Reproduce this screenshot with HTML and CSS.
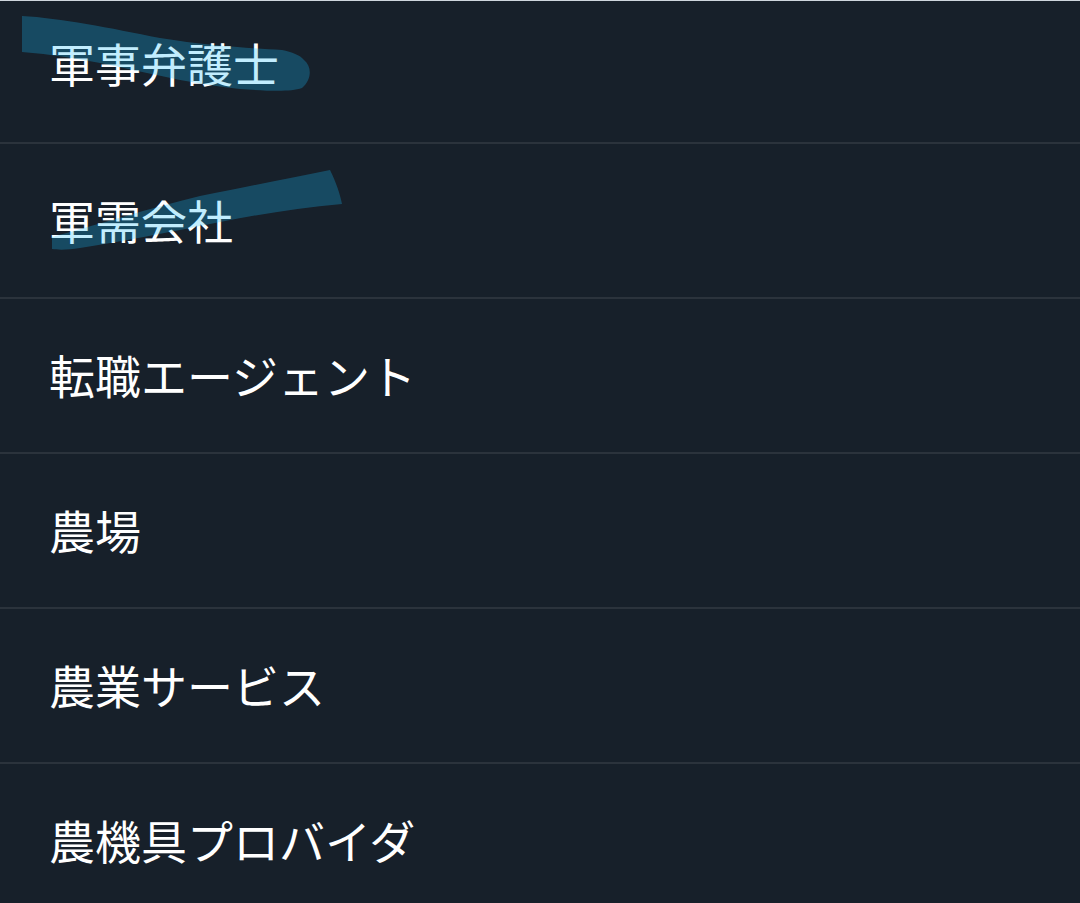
FILE: index.html
```html
<!DOCTYPE html>
<html lang="ja">
<head>
    <meta charset="UTF-8">
    <meta name="viewport" content="width=device-width, initial-scale=1.0">
    <title>業種</title>
    <link rel="stylesheet" href="styles.css">
</head>
<body>
    <ul class="topic-list">
        <li class="topic-item first">軍事弁護士</li>
        <li class="topic-item">軍需会社</li>
        <li class="topic-item">転職エージェント</li>
        <li class="topic-item">農場</li>
        <li class="topic-item">農業サービス</li>
        <li class="topic-item">農機具プロバイダ</li>
    </ul>

    <!-- highlighter marks drawn over the first two rows -->
    <svg class="marks" width="1080" height="300" viewBox="0 0 1080 300">
        <path d="M22 16 C60 18 110 28 160 38 C210 46 250 48 282 50 C292 52 300 55 304 60 C312 66 312 80 302 88 C290 92 270 91 240 89 C200 85 160 76 110 65 C80 59 50 54 22 52 Z"/>
        <path d="M52 237 C100 224 150 208 200 196 C250 186 290 178 330 170 C336 182 340 194 342 204 C300 208 260 214 220 222 C170 232 120 242 80 248 C68 250 58 250 52 249 Z"/>
    </svg>
</body>
</html>
```

FILE: styles.css
```css
body {
    margin: 0;
    background-color: #17202a;
    border-top: 1px solid #cfd6dd;
    font-family: "Noto Sans CJK JP", "Noto Sans", sans-serif;
    color: #fff;
    overflow: hidden;
}
.topic-list {
    list-style: none;
    margin: 0;
    padding: 0;
}
.topic-item {
    box-sizing: border-box;
    height: 155px;
    display: flex;
    align-items: center;
    padding-left: 49px;
    padding-bottom: 4px;
    border-bottom: 2px solid #2b333c;
    font-size: 46px;
    line-height: 1;
}
.topic-item.first {
    height: 143px;
    padding-bottom: 20px;
}
.marks {
    position: absolute;
    top: 0;
    left: 0;
}
.marks path {
    fill: rgba(27, 187, 253, 0.27);
}
```
